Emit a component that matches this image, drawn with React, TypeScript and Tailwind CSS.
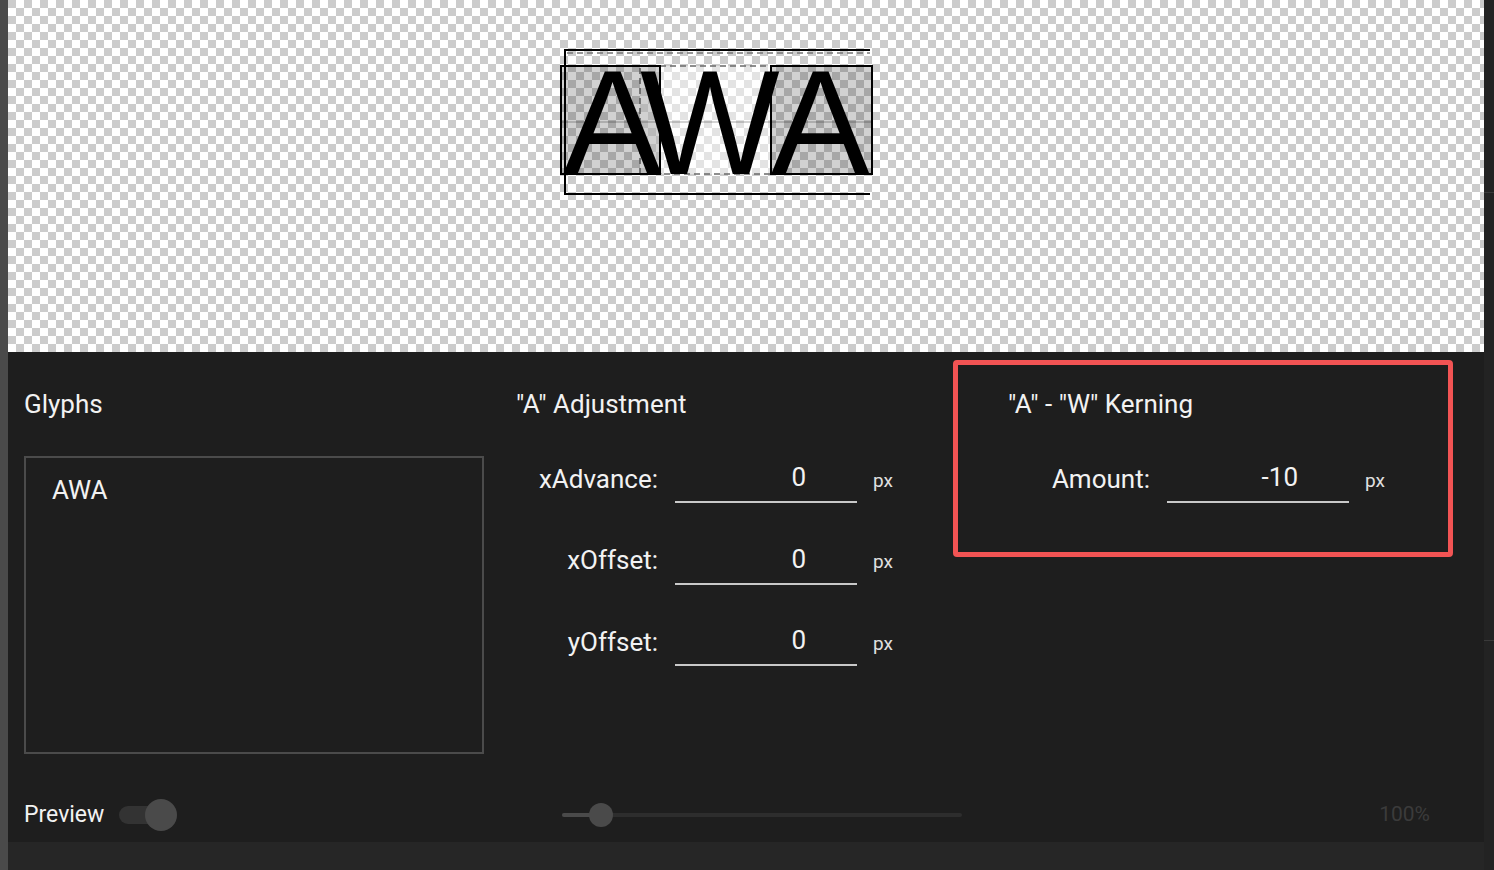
const font = { fontFamily: "Roboto, 'Noto Sans', sans-serif" };

const Field = ({ label, value }: { label: string; value: string }) => (
  <div className="flex items-center h-[40px]">
    <span className="w-[142px] text-right text-[26px] text-[#f2f2f2] mb-[8px] whitespace-nowrap">{label}</span>
    <div className="ml-[17px] w-[182px] h-[40px] border-b-2 border-[#c9c9c9] flex items-start justify-end pr-[51px]">
      <span className="text-[26px] leading-[28px] text-[#f2f2f2]">{value}</span>
    </div>
    <span className="ml-[16px] text-[19px] text-[#e0e0e0] mb-[4px]">px</span>
  </div>
);

const Canvas = () => (
  <svg className="absolute left-0 top-0" width={1476} height={352}>
    <g transform="translate(-8,0)">
      <rect x={640} y={66} width={131} height={108} fill="rgba(255,255,255,0.45)" stroke="#6a6a6a" strokeWidth={1.5} strokeDasharray="6 4" />
      <rect x={561} y={66} width={99} height={108} fill="rgba(0,0,0,0.18)" stroke="#000" strokeWidth={2} />
      <rect x={771} y={66} width={101} height={108} fill="rgba(0,0,0,0.18)" stroke="#000" strokeWidth={2} />
      <line x1={561} y1={122} x2={872} y2={122} stroke="rgba(0,0,0,0.35)" strokeWidth={1} />
      <line x1={565} y1={50} x2={870} y2={50} stroke="#000" strokeWidth={2} />
      <line x1={567} y1={53} x2={870} y2={53} stroke="#777" strokeWidth={1.5} strokeDasharray="6 4" />
      <line x1={565} y1={49} x2={565} y2={195} stroke="#000" strokeWidth={2} />
      <line x1={565} y1={194} x2={870} y2={194} stroke="#000" strokeWidth={2} />
      <g fontFamily="'Liberation Sans', Arial, sans-serif" fontSize={148} fill="#000">
        <text x={563} y={174}>A</text>
        <text x={640} y={174}>W</text>
        <text x={771} y={174}>A</text>
      </g>
    </g>
  </svg>
);

export default function App() {
  return (
    <div className="w-[1494px] h-[870px] flex bg-[#1e1e1e] overflow-hidden" style={font}>
      <div className="w-[8px] h-full bg-[#4a4a4a]" />
      <div className="flex-1 flex flex-col">
        <div className="relative h-[352px] bg-[image:repeating-conic-gradient(#ffffff_0_25%,#cccccc_0_50%)] bg-[length:16px_16px]">
          <Canvas />
        </div>
        <div className="relative h-[490px] bg-[#1e1e1e] px-4 flex flex-col">
          <div className="absolute left-[945px] top-[8px] w-[500px] h-[197px] border-[5px] border-[#f25454] rounded-[4px]" />
          <div className="flex pt-[37px]">
            <div className="w-[492px]">
              <h2 className="text-[26px] leading-[30px] text-[#f2f2f2]">Glyphs</h2>
              <div className="mt-[37px] w-[460px] h-[298px] border-2 border-[#4b4b4b] pl-[26px] pt-[18px]">
                <span className="text-[26px] leading-[28px] text-[#f2f2f2]">AWA</span>
              </div>
            </div>
            <div className="w-[492px]">
              <h2 className="text-[26px] leading-[30px] text-[#f2f2f2]">"A" Adjustment</h2>
              <div className="mt-[44px] flex flex-col gap-[41.5px]">
                <Field label="xAdvance:" value="0" />
                <Field label="xOffset:" value="0" />
                <Field label="yOffset:" value="0" />
              </div>
            </div>
            <div className="w-[460px]">
              <h2 className="text-[26px] leading-[30px] text-[#f2f2f2]">"A" - "W" Kerning</h2>
              <div className="mt-[44px]">
                <Field label="Amount:" value="-10" />
              </div>
            </div>
          </div>
          <div className="mt-auto mb-[11px] h-[32px] flex items-center">
            <div className="w-[492px] flex items-center">
              <span className="text-[23px] text-[#f2f2f2]">Preview</span>
              <div className="ml-[15px] relative w-[58px] h-[32px] flex items-center">
                <div className="w-[50px] h-[18px] rounded-full bg-[#333333]" />
                <div className="absolute left-[26px] top-0 w-[32px] h-[32px] rounded-full bg-[#4a4a4a]" />
              </div>
            </div>
            <div className="ml-[46px] relative w-[400px] h-[24px] flex items-center">
              <div className="w-full h-[4px] rounded-full bg-[#2d2d2d]" />
              <div className="absolute left-0 top-[10px] w-[40px] h-[4px] rounded-full bg-[#4a4a4a]" />
              <div className="absolute left-[27px] top-0 w-[24px] h-[24px] rounded-full bg-[#4a4a4a]" />
            </div>
            <span className="ml-auto mr-[38px] text-[21px] text-[#3b3b3b]">100%</span>
          </div>
        </div>
        <div className="flex-1 bg-[#262626]" />
      </div>
      <div className="w-[10px] h-full bg-[#232323] flex flex-col">
        <div className="h-[192px]" />
        <div className="h-px bg-[#3a3a3a]" />
        <div className="h-[447px]" />
        <div className="h-px bg-[#3a3a3a]" />
      </div>
    </div>
  );
}
